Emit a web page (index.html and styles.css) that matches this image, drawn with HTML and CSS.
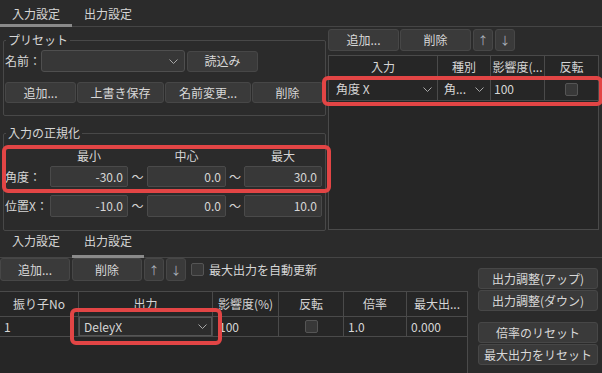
FILE: index.html
```html
<!DOCTYPE html>
<html>
<head>
    <title>入力設定</title>
    <link rel="stylesheet" href="styles.css">
</head>
<body>
<div class="pane pane-top">
    <div class="tabbar">
        <div class="tab active">入力設定</div>
        <div class="tab">出力設定</div>
    </div>
    <div class="top-body">
        <div class="left">
            <fieldset class="group group-preset">
                <legend>プリセット</legend>
                <div class="preset-row">
                    <span class="label">名前：</span>
                    <div class="combo combo-name">
                        <span></span>
                        <svg class="chevron" width="9" height="5" viewBox="0 0 9 5"><path d="M0.5 0.5 L4.5 4.5 L8.5 0.5"/></svg>
                    </div>
                    <button class="btn btn-load">読込み</button>
                </div>
                <div class="preset-buttons">
                    <button class="btn">追加...</button>
                    <button class="btn">上書き保存</button>
                    <button class="btn">名前変更...</button>
                    <button class="btn">削除</button>
                </div>
            </fieldset>

            <fieldset class="group group-norm">
                <legend>入力の正規化</legend>
                <div class="norm-grid norm-head">
                    <span></span><span>最小</span><span></span><span>中心</span><span></span><span>最大</span>
                </div>
                <div class="norm-grid norm-row">
                    <span class="label">角度：</span>
                    <div class="spin">-30.0</div>
                    <span class="tilde">〜</span>
                    <div class="spin">0.0</div>
                    <span class="tilde">〜</span>
                    <div class="spin">30.0</div>
                </div>
                <div class="norm-grid norm-row norm-row-2">
                    <span class="label">位置X：</span>
                    <div class="spin">-10.0</div>
                    <span class="tilde">〜</span>
                    <div class="spin">0.0</div>
                    <span class="tilde">〜</span>
                    <div class="spin">10.0</div>
                </div>
            </fieldset>
        </div>

        <div class="right">
            <div class="toolbar">
                <button class="btn btn-wide">追加...</button>
                <button class="btn btn-wide">削除</button>
                <button class="btn btn-arrow">↑</button>
                <button class="btn btn-arrow">↓</button>
            </div>
            <div class="grid grid-input">
                <div class="grid-row grid-head">
                    <div>入力</div>
                    <div>種別</div>
                    <div>影響度(...</div>
                    <div>反転</div>
                </div>
                <div class="grid-row grid-data">
                    <div class="cell-combo">
                        <span>角度 X</span>
                        <svg class="chevron" width="9" height="5" viewBox="0 0 9 5"><path d="M0.5 0.5 L4.5 4.5 L8.5 0.5"/></svg>
                    </div>
                    <div class="cell-combo cell-kind">
                        <span>角...</span>
                        <svg class="chevron" width="9" height="5" viewBox="0 0 9 5"><path d="M0.5 0.5 L4.5 4.5 L8.5 0.5"/></svg>
                    </div>
                    <div class="cell-text">100</div>
                    <div class="cell-check"><span class="checkbox"></span></div>
                </div>
            </div>
        </div>
    </div>
    <div class="mark mark-norm"></div>
    <div class="mark mark-input"></div>
</div>

<div class="pane pane-bottom">
    <div class="tabbar">
        <div class="tab">入力設定</div>
        <div class="tab active">出力設定</div>
    </div>
    <div class="bottom-body">
        <div class="bottom-main">
            <div class="toolbar toolbar-out">
                <button class="btn">追加...</button>
                <button class="btn">削除</button>
                <button class="btn btn-arrow">↑</button>
                <button class="btn btn-arrow">↓</button>
                <span class="checkbox"></span>
                <span class="check-label">最大出力を自動更新</span>
            </div>
            <div class="grid grid-output">
                <div class="grid-row grid-head">
                    <div>振り子No</div>
                    <div>出力</div>
                    <div>影響度(%)</div>
                    <div>反転</div>
                    <div>倍率</div>
                    <div>最大出...</div>
                </div>
                <div class="grid-row grid-data">
                    <div class="cell-text">1</div>
                    <div class="cell-editor">
                        <div class="combo combo-out">
                            <span>DeleyX</span>
                            <svg class="chevron" width="9" height="5" viewBox="0 0 9 5"><path d="M0.5 0.5 L4.5 4.5 L8.5 0.5"/></svg>
                        </div>
                    </div>
                    <div class="cell-text">100</div>
                    <div class="cell-check"><span class="checkbox"></span></div>
                    <div class="cell-text">1.0</div>
                    <div class="cell-text">0.000</div>
                </div>
            </div>
        </div>
        <div class="side">
            <button class="btn">出力調整(アップ)</button>
            <button class="btn">出力調整(ダウン)</button>
            <button class="btn side-gap">倍率のリセット</button>
            <button class="btn">最大出力をリセット</button>
        </div>
    </div>
    <div class="mark mark-output"></div>
</div>
</body>
</html>
```

FILE: styles.css
```css
body {
    margin: 0;
    width: 602px;
    height: 373px;
    overflow: hidden;
    background-color: #2b2b2b;
    color: #d6d6d6;
    font-family: "Noto Sans CJK JP", "Noto Sans", sans-serif;
    font-size: 12px;
    line-height: 16px;
}

.pane {
    position: relative;
}
.pane-top {
    height: 230px;
}
.pane-bottom {
    height: 143px;
}

/* tabs */
.tabbar {
    display: flex;
    height: 26px;
    border-bottom: 1px solid #454545;
}
.tab {
    width: 72px;
    height: 27px;
    box-sizing: border-box;
    padding-top: 6px;
    margin-bottom: -1px;
    text-align: center;
}
.tab.active {
    border-bottom: 3px solid #8a8a8a;
}
.pane-bottom .tabbar {
    height: 27px;
}
.pane-bottom .tab {
    height: 28px;
    padding-top: 3px;
}

/* common widgets */
.btn {
    margin: 0;
    padding: 0;
    height: 21px;
    box-sizing: border-box;
    border: 1px solid #474747;
    border-radius: 3px;
    background-color: #3a3a3a;
    color: #d8d8d8;
    font-family: inherit;
    font-size: 12px;
    line-height: 16px;
}
.btn-arrow {
    width: 20px;
    color: #aab2ba;
    font-size: 11px;
}
.combo {
    display: flex;
    align-items: center;
    justify-content: space-between;
    box-sizing: border-box;
    border: 1px solid #4f4f4f;
    border-radius: 3px;
    background-color: #373737;
}
.chevron {
    display: block;
    fill: none;
    stroke: #a8a8a8;
    stroke-width: 1;
}
.checkbox {
    display: inline-block;
    width: 13px;
    height: 13px;
    box-sizing: border-box;
    border: 1px solid #555;
    border-radius: 2px;
    background-color: #383838;
}

/* left column */
.top-body {
    display: flex;
}
.left {
    width: 324px;
    padding-left: 3px;
}
.group {
    width: 323px;
    box-sizing: border-box;
    margin: 0;
    padding: 0 1px;
    min-width: 0;
    border: 1px solid #484848;
    border-radius: 2px;
}
.group legend {
    margin-left: 1px;
    padding: 0 2px;
    line-height: 14px;
}
.group-preset {
    margin-top: 6px;
    padding-bottom: 12px;
}
.preset-row {
    display: flex;
    align-items: center;
    height: 22px;
    margin-top: 3px;
}
.preset-row .label {
    width: 36px;
}
.combo-name {
    width: 144px;
    height: 22px;
    padding-right: 6px;
}
.btn-load {
    width: 71px;
    margin-left: 2px;
}
.preset-buttons {
    display: grid;
    grid-template-columns: 71px 87px 86px 71px;
    gap: 1px;
    margin-top: 10px;
}

.group-norm {
    margin-top: 10px;
    padding-bottom: 13px;
}
.norm-grid {
    display: grid;
    grid-template-columns: 45px 78px 19px 79px 18px 78px;
    align-items: center;
}
.norm-head {
    margin-top: 9px;
    line-height: 14px;
    text-align: center;
}
.norm-row {
    margin-top: 3px;
}
.norm-row-2 {
    margin-top: 8px;
}
.norm-row-2 .spin {
    height: 22px;
    line-height: 20px;
}
.spin {
    height: 21px;
    box-sizing: border-box;
    padding-right: 4px;
    border: 1px solid #4a4a4a;
    border-radius: 2px;
    background-color: #383838;
    text-align: right;
    line-height: 19px;
}
.tilde {
    text-align: center;
}

/* right column */
.right {
    flex: 1;
    padding-left: 1px;
}
.toolbar {
    display: flex;
    gap: 1px;
    margin-top: 2px;
}
.toolbar .btn {
    height: 22px;
}
.btn-wide {
    width: 71px;
}
.toolbar .btn-arrow {
    margin-left: 1px;
}

/* grids */
.grid {
    box-sizing: border-box;
    border: 1px solid #4a4a4a;
    background-color: #262626;
}
.grid-row {
    display: grid;
    border-bottom: 1px solid #4a4a4a;
}
.grid-row > div {
    display: flex;
    align-items: center;
    min-width: 0;
    border-right: 1px solid #4a4a4a;
}
.grid-row > div:last-child {
    border-right: none;
}
.grid-head > div {
    justify-content: center;
}
.cell-text {
    padding-left: 3px;
}
.cell-check {
    justify-content: center;
}
.cell-combo {
    justify-content: space-between;
    padding: 0 5px 0 7px;
}
.cell-kind {
    padding: 0 6px 0 6px;
}

.grid-input {
    width: 271px;
    height: 175px;
    margin-top: 4px;
}
.grid-input .grid-row {
    grid-template-columns: 109px 53px 54px 1fr;
}
.grid-input .grid-head {
    height: 21px;
}
.grid-input .grid-data {
    height: 22px;
}

/* bottom pane */
.bottom-body {
    display: flex;
}
.bottom-main {
    width: 478px;
}
.toolbar-out {
    gap: 2px;
    margin-top: 0;
    align-items: center;
}
.toolbar-out .btn {
    width: 70px;
    height: 23px;
}
.toolbar-out .btn-arrow {
    width: 20px;
    margin-left: 0;
}
.toolbar-out .checkbox {
    margin-left: 3px;
}
.check-label {
    margin-left: 3px;
}
.grid-output {
    width: 469px;
    height: 90px;
    margin-top: 10px;
    margin-left: -1px;
}
.grid-output .grid-row {
    grid-template-columns: 79px 134px 66px 65px 63px 1fr;
}
.grid-output .grid-head {
    height: 24px;
}
.grid-output .grid-data {
    height: 19px;
}
.grid-output .cell-text {
    padding-left: 4px;
}
.grid-output .grid-data > div:nth-child(3) {
    padding-left: 6px;
}
.cell-editor {
    align-items: stretch !important;
}
.combo-out {
    flex: 1;
    border-radius: 0;
    border-color: #555;
    background-color: #2c2c2c;
    padding: 0 4px 0 4px;
}

.side {
    display: flex;
    flex-direction: column;
    gap: 1px;
    width: 120px;
    padding-top: 10px;
}
.side .btn {
    height: 21px;
}
.side .side-gap {
    margin-top: 10px;
}

/* red highlight marks */
.mark {
    position: absolute;
    box-sizing: border-box;
    border: 4px solid #e24545;
    border-radius: 6px;
    pointer-events: none;
}
.mark-norm {
    left: 2px;
    top: 145px;
    width: 329px;
    height: 48px;
}
.mark-input {
    left: 322px;
    top: 76px;
    width: 281px;
    height: 30px;
}
.mark-output {
    left: 70px;
    top: 78px;
    width: 152px;
    height: 37px;
}
```
